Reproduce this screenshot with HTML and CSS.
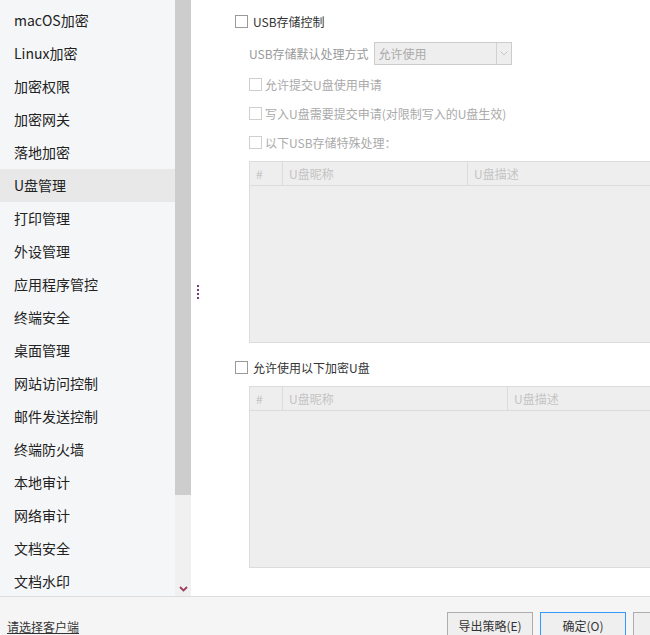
FILE: index.html
```html
<!DOCTYPE html>
<html lang="zh">
<head>
<meta charset="utf-8">
<link rel="stylesheet" href="styles.css">
</head>
<body>
<div class="app">
  <div class="main">
    <div class="side">
      <ul class="nav">
        <li>macOS加密</li>
        <li>Linux加密</li>
        <li>加密权限</li>
        <li>加密网关</li>
        <li>落地加密</li>
        <li class="active">U盘管理</li>
        <li>打印管理</li>
        <li>外设管理</li>
        <li>应用程序管控</li>
        <li>终端安全</li>
        <li>桌面管理</li>
        <li>网站访问控制</li>
        <li>邮件发送控制</li>
        <li>终端防火墙</li>
        <li>本地审计</li>
        <li>网络审计</li>
        <li>文档安全</li>
        <li>文档水印</li>
      </ul>
      <div class="scrollbar">
        <div class="thumb"></div>
        <div class="arrow">
          <svg width="9" height="6" viewBox="0 0 9 6"><path d="M1 1 L4.5 4.5 L8 1" fill="none" stroke="#9a3f62" stroke-width="1.8"/></svg>
        </div>
      </div>
    </div>
    <div class="splitter">
      <div class="dots"><i></i><i></i><i></i><i></i></div>
    </div>
    <div class="content">
      <label class="row top"><span class="cb"></span><span class="lbl">USB存储控制</span></label>
      <div class="row sel-row indent">
        <span class="dim">USB存储默认处理方式</span>
        <div class="select">
          <span class="sel-text">允许使用</span>
          <span class="sel-arrow"><svg width="8" height="5" viewBox="0 0 8 5"><path d="M0.5 0.5 L4 4 L7.5 0.5" fill="none" stroke="#c8c8c8" stroke-width="1"/></svg></span>
        </div>
      </div>
      <label class="row sub indent"><span class="cb dis"></span><span class="dim2">允许提交U盘使用申请</span></label>
      <label class="row sub indent"><span class="cb dis"></span><span class="dim2">写入U盘需要提交申请(对限制写入的U盘生效)</span></label>
      <label class="row sub indent"><span class="cb dis"></span><span class="dim2">以下USB存储特殊处理：</span></label>
      <div class="table t1 indent">
        <div class="thead">
          <div class="th c-num">#</div>
          <div class="th c-name">U盘昵称</div>
          <div class="th c-desc">U盘描述</div>
        </div>
      </div>
      <label class="row enc"><span class="cb"></span><span class="lbl">允许使用以下加密U盘</span></label>
      <div class="table t2 indent">
        <div class="thead">
          <div class="th c-num">#</div>
          <div class="th c-name">U盘昵称</div>
          <div class="th c-desc">U盘描述</div>
        </div>
      </div>
    </div>
  </div>
  <div class="footer">
    <div class="link-wrap"><a class="link" href="#">请选择客户端</a></div>
    <div class="buttons">
      <button class="btn">导出策略(E)</button>
      <button class="btn primary">确定(O)</button>
      <button class="btn" aria-label="取消"></button>
    </div>
  </div>
</div>
</body>
</html>
```

FILE: styles.css
```css
* { box-sizing: border-box; }
html, body {
  margin: 0;
  padding: 0;
  width: 650px;
  height: 635px;
  overflow: hidden;
  background: #fff;
  font-family: "Noto Sans CJK SC", "Noto Sans", sans-serif;
}
.app {
  display: flex;
  flex-direction: column;
  width: 650px;
  height: 635px;
}
.main {
  display: flex;
  height: 596px;
  flex: none;
  overflow: hidden;
}
.side {
  display: flex;
  width: 191px;
  flex: none;
  height: 596px;
}
.nav {
  list-style: none;
  margin: 0;
  padding: 4px 0 0 0;
  width: 175px;
  height: 596px;
  overflow: hidden;
  background: #f5f6f8;
}
.nav li {
  height: 33px;
  line-height: 33px;
  padding-left: 14px;
  font-size: 14px;
  color: #222;
  white-space: nowrap;
}
.nav li.active { background: #e8e8e8; }
.scrollbar {
  width: 16px;
  height: 596px;
  background: #f0f0f0;
  display: flex;
  flex-direction: column;
  justify-content: space-between;
}
.thumb {
  height: 495px;
  background: #cdcdcd;
}
.arrow {
  height: 13px;
  display: flex;
  justify-content: center;
  align-items: flex-start;
  padding-top: 3px;
}
.splitter {
  width: 12px;
  flex: none;
  display: flex;
  align-items: center;
  padding-left: 6px;
}
.dots {
  display: flex;
  flex-direction: column;
  gap: 2px;
  margin-top: -12px;
}
.dots i {
  display: block;
  width: 2px;
  height: 2px;
  background: #7a3a7c;
}
.content {
  flex: 1;
  overflow: hidden;
  padding-left: 32px;
  display: flex;
  flex-direction: column;
  font-size: 12px;
}
.row {
  display: flex;
  align-items: center;
  white-space: nowrap;
}
.indent { margin-left: 14px; }
.top { height: 28px; margin-top: 7px; }
.sel-row { height: 23px; margin-top: 7px; }
.sub { height: 29px; }
.sel-row + .sub { margin-top: 5px; }
.enc { height: 28px; margin-top: 10px; }
.cb {
  width: 13px;
  height: 13px;
  border: 1px solid #9a9a9a;
  background: #fff;
  margin-right: 5px;
  flex: none;
}
.cb.dis { border-color: #cfcfcf; margin-right: 3px; }
.lbl { color: #333; font-size: 12px; }
.dim { color: #999; }
.dim2 { color: #aaa; }
.select {
  margin-left: 5px;
  width: 138px;
  height: 23px;
  border: 1px solid #cccccc;
  background: #eeeeee;
  display: flex;
  align-items: center;
}
.sel-text {
  flex: 1;
  padding-left: 4px;
  color: #aaa;
}
.sel-arrow {
  width: 15px;
  height: 21px;
  border-left: 1px solid #d0d0d0;
  display: flex;
  align-items: center;
  justify-content: center;
}
.table {
  width: 520px;
  height: 182px;
  flex: none;
  border: 1px solid #dcdcdc;
  background: #eeeeee;
}
.t1 { margin-top: 4px; }
.t2 { margin-top: 5px; }
.thead {
  display: flex;
  height: 24px;
  border-bottom: 1px solid #dcdcdc;
}
.th {
  color: #c4c4c4;
  padding-left: 6px;
  display: flex;
  align-items: center;
  flex: none;
}
.c-num { width: 33px; border-right: 1px solid #dcdcdc; }
.t1 .c-name { width: 185px; border-right: 1px solid #dcdcdc; }
.t2 .c-name { width: 225px; border-right: 1px solid #dcdcdc; }
.c-desc { flex: 1; }
.footer {
  flex: 1;
  border-top: 1px solid #dddddd;
  background: #f5f5f5;
  display: flex;
  padding-left: 7px;
  padding-top: 15px;
  overflow: hidden;
}
.link-wrap {
  flex: 0 0 440px;
  padding-top: 6px;
  font-size: 12px;
}
.link {
  color: #333;
  text-decoration: underline;
}
.buttons {
  display: flex;
  gap: 7px;
  flex: none;
}
.btn {
  width: 86px;
  height: 30px;
  border: 1px solid #adadad;
  background: #efefef;
  font-family: "Noto Sans CJK SC", "Noto Sans", sans-serif;
  font-size: 12px;
  color: #333;
  padding: 0 0 4px 0;
  margin: 0;
}
.btn.primary { border-color: #3399ff; }
```
